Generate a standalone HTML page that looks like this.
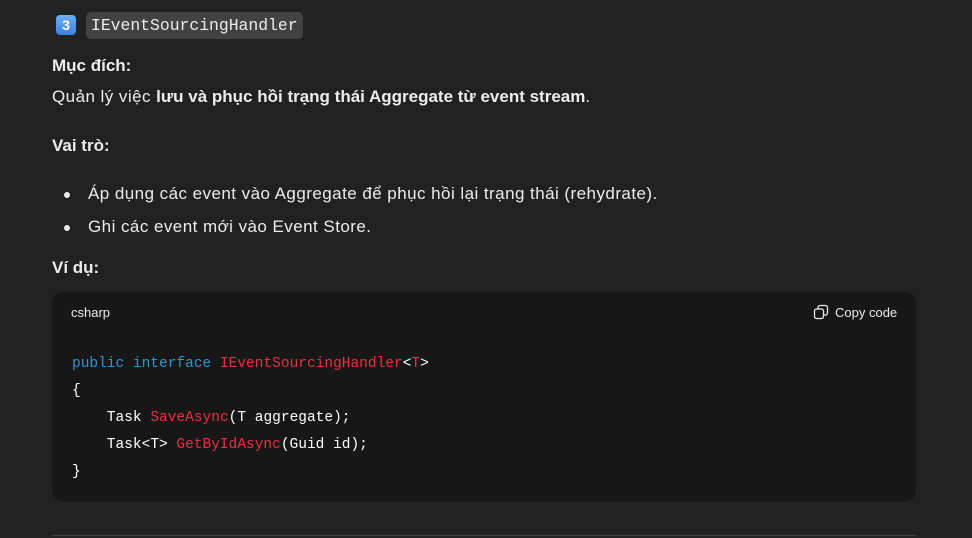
<!DOCTYPE html>
<html><head><meta charset="utf-8"><style>
body{margin:0;background:#212121;color:#ececec;font-family:"Liberation Sans",sans-serif;font-size:17px;width:972px;height:538px;overflow:hidden;position:relative}
.a{position:absolute;white-space:nowrap}
.n{letter-spacing:0.45px}
b{font-weight:700;letter-spacing:0}
.badge{position:absolute;left:56px;top:15px;width:20px;height:20px;border-radius:4px;background:linear-gradient(#6aaef5,#3b82e0);color:#fff;font-weight:700;font-size:14px;text-align:center;line-height:20px}
.ic{position:absolute;left:86px;top:12px;height:27px;padding:0 5px;background:#424242;border-radius:5px;font-family:"Liberation Mono",monospace;font-size:16.4px;line-height:27px;color:#ececec}
.code{position:absolute;left:52px;top:292px;width:864px;height:210px;background:#171717;border-radius:12px}
.pre{position:absolute;left:72px;top:351px;font-family:"Liberation Mono",monospace;font-size:14.5px;line-height:27px;white-space:pre;color:#fff}
.k{color:#2e95d3}.t{color:#e9313f}
.dot{position:absolute;left:64px;width:6px;height:6px;border-radius:50%;background:#ececec}
</style></head><body>
<div class="badge">3</div>
<div class="ic">IEventSourcingHandler</div>
<div class="a" style="left:52px;top:56px"><b>Mục đích:</b></div>
<div class="a n" style="left:52px;top:87px">Quản lý việc <b>lưu và phục hồi trạng thái Aggregate từ event stream</b>.</div>
<div class="a" style="left:52px;top:136px"><b>Vai trò:</b></div>
<div class="dot" style="top:192px"></div>
<div class="a n" style="left:88px;top:184px">Áp dụng các event vào Aggregate để phục hồi lại trạng thái (rehydrate).</div>
<div class="dot" style="top:225px"></div>
<div class="a n" style="left:88px;top:217px">Ghi các event mới vào Event Store.</div>
<div class="a" style="left:52px;top:258px"><b>Ví dụ:</b></div>
<div class="code"></div>
<div class="a" style="left:71px;top:305px;font-size:13px;color:#ececec">csharp</div>
<svg class="a" style="left:813px;top:304px" width="16" height="16" viewBox="0 0 16 16" fill="none" stroke="#ececec" stroke-width="1.3"><rect x="1.5" y="5" width="9" height="9.5" rx="2"/><path d="M5 5V3.5a2 2 0 0 1 2-2h5.5a2 2 0 0 1 2 2V9a2 2 0 0 1-2 2H10.5"/></svg>
<div class="a" style="left:835px;top:305px;font-size:13px;color:#ececec">Copy code</div>
<div class="pre"><span class="k">public</span> <span class="k">interface</span> <span class="t">IEventSourcingHandler</span>&lt;<span class="t">T</span>&gt;
{
    Task <span class="t">SaveAsync</span>(T aggregate);
    Task&lt;T&gt; <span class="t">GetByIdAsync</span>(Guid id);
}</div>
<div class="a" style="left:52px;top:535px;width:864px;height:1px;background:#444"></div>
</body></html>
